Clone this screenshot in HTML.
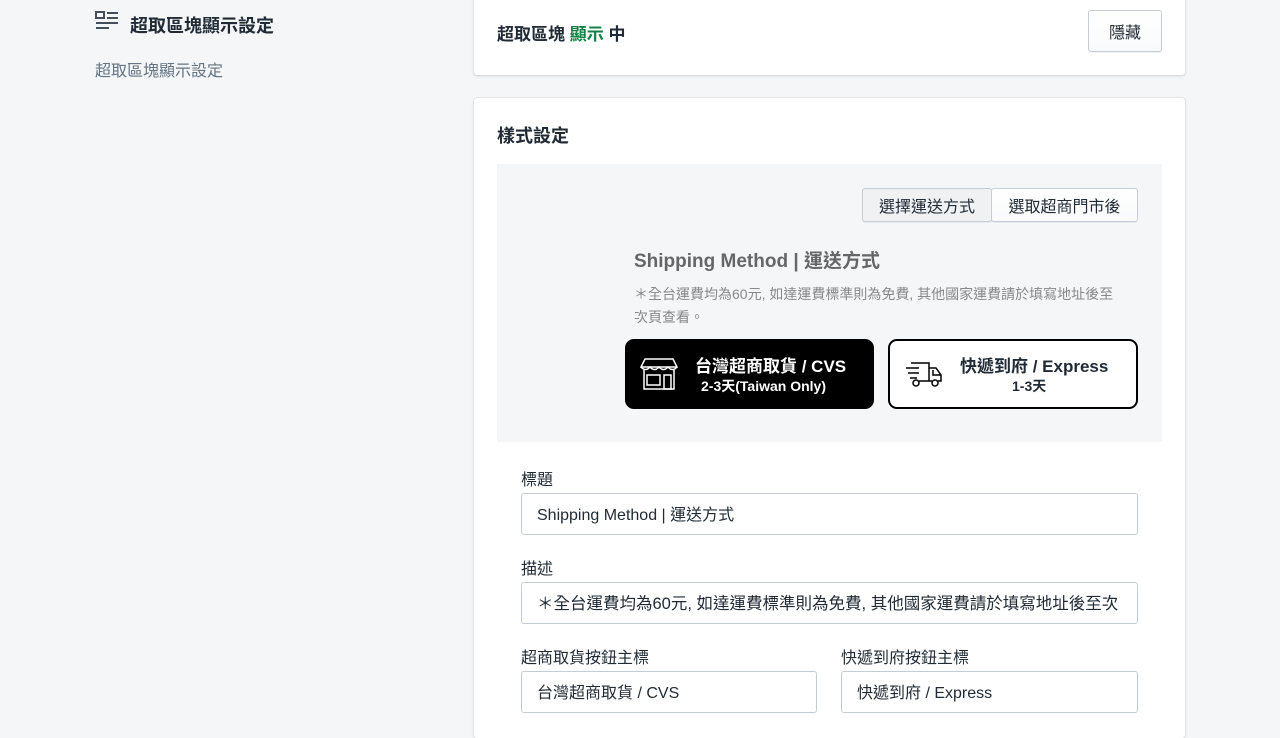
<!DOCTYPE html>
<html><head><meta charset="utf-8"><style>
*{box-sizing:border-box;margin:0;padding:0}
body{width:1280px;height:720px;overflow:hidden;background:#f4f6f8;font-family:"Liberation Sans","Noto Sans CJK TC",sans-serif;color:#212b36;position:relative}
.abs{position:absolute}
.card{position:absolute;background:#fff;border-radius:3px;box-shadow:0 0 0 1px rgba(63,63,68,.05),0 1px 3px rgba(63,63,68,.15)}
.btn{position:absolute;border:1px solid #c4cdd5;border-radius:3px;background:linear-gradient(#fff,#f9fafb);font-size:16px;display:flex;align-items:center;justify-content:center;box-shadow:0 1px 0 rgba(22,29,37,.05)}
.lbl{position:absolute;font-size:16px;color:#212b36}
.inp{position:absolute;border:1px solid #c4cdd5;border-radius:3px;background:#fff;font-size:16px;padding-left:15px;display:flex;align-items:center;white-space:nowrap;overflow:hidden;padding-bottom:2px}
</style></head><body>
<svg class="abs" style="left:95px;top:11px" width="24" height="22" viewBox="0 0 24 22"><rect x="1" y="1" width="8" height="6" fill="none" stroke="#454f5b" stroke-width="2"/><g stroke="#454f5b" stroke-width="2"><line x1="12" y1="2" x2="23" y2="2"/><line x1="12" y1="7" x2="23" y2="7"/><line x1="1" y1="12" x2="23" y2="12"/><line x1="1" y1="17" x2="14" y2="17"/></g></svg>
<div class="abs" style="left:130px;top:12px;font-size:18px;font-weight:bold">超取區塊顯示設定</div>
<div class="abs" style="left:95px;top:57px;font-size:16px;color:#637381">超取區塊顯示設定</div>
<div class="card" style="left:474px;top:-5px;width:711px;height:80px"></div>
<div class="abs" style="left:497px;top:20px;font-size:17px;font-weight:bold">超取區塊 <span style="color:#108043">顯示</span> 中</div>
<div class="btn" style="left:1088px;top:10px;width:74px;height:42px">隱藏</div>
<div class="card" style="left:474px;top:98px;width:711px;height:640px"></div>
<div class="abs" style="left:497px;top:122px;font-size:18px;font-weight:bold">樣式設定</div>
<div class="abs" style="left:497px;top:164px;width:665px;height:278px;background:#f4f6f8"></div>
<div class="btn" style="left:862px;top:188px;width:130px;height:34px;background:#f0f1f3">選擇運送方式</div>
<div class="btn" style="left:991px;top:188px;width:147px;height:34px">選取超商門市後</div>
<div class="abs" style="left:634px;top:246px;font-size:19px;font-weight:bold;color:#666">Shipping Method | 運送方式</div>
<div class="abs" style="left:634px;top:283px;width:486px;font-size:14px;line-height:23px;color:#888">＊全台運費均為60元, 如達運費標準則為免費, 其他國家運費請於填寫地址後至次頁查看。</div>
<div class="abs" style="left:625px;top:339px;width:249px;height:70px;background:#000;border-radius:9px;color:#fff">
<svg class="abs" style="left:15px;top:18px" width="38" height="34" viewBox="0 0 38 34" fill="none" stroke="#fff" stroke-width="1.5"><path d="M5 2h28l4 8H1z"/><path d="M1 10q4.5 5 9 0q4.5 5 9 0q4.5 5 9 0q4.5 5 9 0"/><path d="M4 13v19h30V13"/><rect x="7" y="18" width="13" height="10"/><rect x="24" y="18" width="7" height="14"/></svg>
<div class="abs" style="left:70px;top:13px;font-size:17px;font-weight:bold">台灣超商取貨 / CVS</div>
<div class="abs" style="left:76px;top:37px;font-size:14px;font-weight:bold">2-3天(Taiwan Only)</div></div>
<div class="abs" style="left:888px;top:339px;width:250px;height:70px;background:#fff;border:2px solid #000;border-radius:9px">
<svg class="abs" style="left:15px;top:19px" width="38" height="30" viewBox="0 0 38 30" fill="none" stroke="#000" stroke-width="1.5"><path d="M6 3h18v18M24 8h7l5 7v6h-3M28 10v5h8"/><line x1="1" y1="8" x2="14" y2="8"/><line x1="3" y1="13" x2="14" y2="13"/><line x1="5" y1="18" x2="12" y2="18"/><circle cx="11" cy="23" r="3"/><circle cx="30" cy="23" r="3"/><path d="M14 21h13"/></svg>
<div class="abs" style="left:70px;top:11px;font-size:17px;font-weight:bold">快遞到府 / Express</div>
<div class="abs" style="left:122px;top:35px;font-size:14px;font-weight:bold">1-3天</div></div>
<div class="lbl" style="left:521px;top:466px">標題</div>
<div class="inp" style="left:521px;top:493px;width:617px;height:42px">Shipping Method | 運送方式</div>
<div class="lbl" style="left:521px;top:555px">描述</div>
<div class="inp" style="left:521px;top:582px;width:617px;height:42px;font-size:16.5px">＊全台運費均為60元, 如達運費標準則為免費, 其他國家運費請於填寫地址後至次</div>
<div class="lbl" style="left:521px;top:644px">超商取貨按鈕主標</div>
<div class="lbl" style="left:841px;top:644px">快遞到府按鈕主標</div>
<div class="inp" style="left:521px;top:671px;width:296px;height:42px">台灣超商取貨 / CVS</div>
<div class="inp" style="left:841px;top:671px;width:297px;height:42px">快遞到府 / Express</div>
</body></html>
